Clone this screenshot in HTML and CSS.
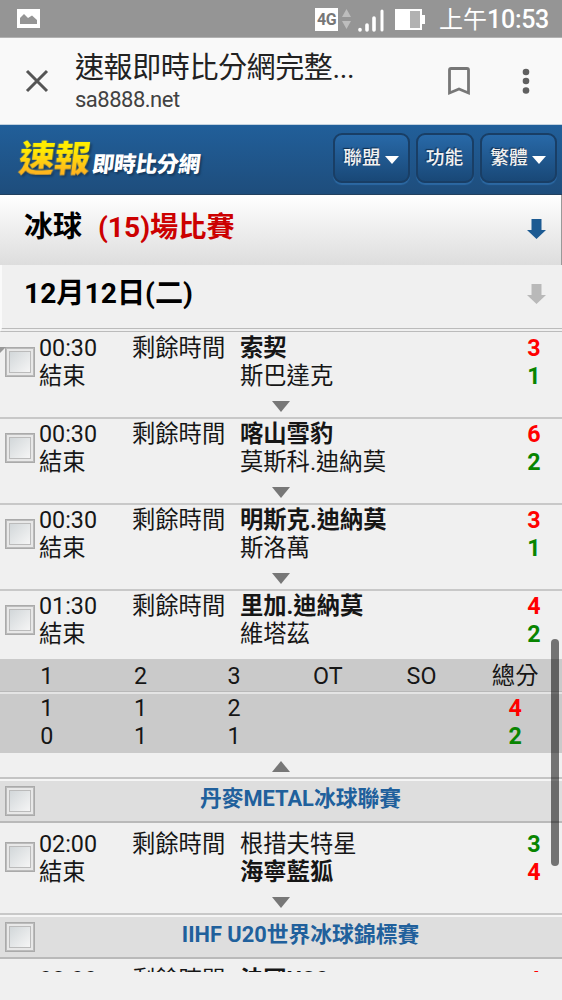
FILE: index.html
```
<!DOCTYPE html>
<html lang="zh-Hant">
<head>
<meta charset="utf-8">
<title>速報即時比分網</title>
<link rel="stylesheet" href="styles.css">
</head>
<body>
<div class="screen">
  <div class="status">
    <svg class="status-picture" width="23" height="19" viewBox="0 0 23 19"><path fill="#fff" d="M0 0h23v19H0z"/><path fill="#959595" d="M3 15V9l4-4 4 4 4-2.500 5 4.500v4z"/></svg>
    <span class="net">4G</span>
    <svg class="updown" width="9" height="20" viewBox="0 0 9 20"><path fill="#bdbdbd" d="M4.500 0 9 8H0zM0 12h9l-4.500 8z"/></svg>
    <svg class="signal" width="26" height="23" viewBox="0 0 26 23"><g stroke="#fff" stroke-width="3.600" stroke-linecap="round"><path d="M2 20.500v.5M9 16v5M16 9v12"/><path d="M24 2v19" stroke-width="3"/></g></svg>
    <svg class="battery" width="31" height="22" viewBox="0 0 31 22"><path fill="#fff" d="M0 0h27v6h3v9h-3v6H0z"/><path fill="#b2b2b2" d="M15 2h10v17H15z"/></svg>
    <span class="clock">上午<b>10:53</b></span>
  </div>
  <div class="browser">
    <svg class="close" width="24" height="24" viewBox="0 0 24 24"><path d="m2 2 20 20M22 2 2 22" stroke="#555" stroke-width="3"/></svg>
    <div class="page-name"><div class="page-title">速報即時比分網完整...</div><div class="page-url">sa8888.net</div></div>
    <svg class="bookmark" width="22" height="29" viewBox="0 0 22 29"><path d="M1.500 3q0-1.500 1.500-1.500h16q1.500 0 1.500 1.500v23L11 22 1.500 26z" fill="none" stroke="#777" stroke-width="2.800"/></svg>
    <svg class="dots" width="8" height="26" viewBox="0 0 8 26"><g fill="#606060"><circle cx="4" cy="4" r="3.300"/><circle cx="4" cy="13" r="3.300"/><circle cx="4" cy="22.500" r="3.300"/></g></svg>
  </div>
  <header class="site">
    <div class="logo"><span class="logo-big">速報</span><span class="logo-small">即時比分網</span></div>
    <nav class="buttons">
      <div class="btn">聯盟<i class="caret"></i></div>
      <div class="btn btn-narrow">功能</div>
      <div class="btn">繁體<i class="caret"></i></div>
    </nav>
  </header>
  <div class="sport"><span>冰球</span><span class="count">(15)場比賽</span>
    <svg class="arrow" width="19" height="20" viewBox="0 0 19 20"><path fill="#1c5a92" d="M4.500 0h10v11H19l-9.500 9L0 11h4.500z"/></svg></div>
  <div class="date"><span>12月12日(二)</span>
    <svg class="arrow" width="19" height="20" viewBox="0 0 19 20"><path fill="#b9b9b9" d="M4.500 0h10v11H19l-9.500 9L0 11h4.500z"/></svg></div>
  <main class="list">
    <section class="match first">
      <i class="check"></i><div>00:30<br>結束</div><div>剩餘時間</div><div><b>索契</b><br>斯巴達克</div><div class="score"><span class="win">3</span><br><span class="lose">1</span></div><i class="more"></i>
    </section>
    <section class="match">
      <i class="check"></i><div>00:30<br>結束</div><div>剩餘時間</div><div><b>喀山雪豹</b><br>莫斯科.迪納莫</div><div class="score"><span class="win">6</span><br><span class="lose">2</span></div><i class="more"></i>
    </section>
    <section class="match">
      <i class="check"></i><div>00:30<br>結束</div><div>剩餘時間</div><div><b>明斯克.迪納莫</b><br>斯洛萬</div><div class="score"><span class="win">3</span><br><span class="lose">1</span></div><i class="more"></i>
    </section>
    <section class="match open">
      <i class="check"></i><div>01:30<br>結束</div><div>剩餘時間</div><div><b>里加.迪納莫</b><br>維塔茲</div><div class="score"><span class="win">4</span><br><span class="lose">2</span></div>
    </section>
    <section class="periods">
      <div class="period-row head"><span>1</span><span>2</span><span>3</span><span>OT</span><span>SO</span><span>總分</span></div>
      <div class="period-row"><span>1</span><span>1</span><span>2</span><span></span><span></span><span class="win">4</span></div>
      <div class="period-row"><span>0</span><span>1</span><span>1</span><span></span><span></span><span class="lose">2</span></div>
    </section>
    <div class="fold"><i class="less"></i></div>
    <div class="league"><i class="check"></i><span>丹麥METAL冰球聯賽</span></div>
    <section class="match tall">
      <i class="check"></i><div>02:00<br>結束</div><div>剩餘時間</div><div>根措夫特星<br><b>海寧藍狐</b></div><div class="score"><span class="lose">3</span><br><span class="win">4</span></div><i class="more"></i>
    </section>
    <div class="league"><i class="check"></i><span>IIHF U20世界冰球錦標賽</span></div>
    <section class="match tall cut">
      <i></i><div>02:00</div><div>剩餘時間</div><div><b>法國U20</b></div><div class="score"><span class="win">4</span></div>
    </section>
  </main>
  <i class="scrollbar"></i>
  <i class="corner"></i>
</div>
</body>
</html>
```
FILE: styles.css
```
* { box-sizing: border-box; }
body { margin: 0; background: #f0f0f0; font-family: Roboto, "Noto Sans CJK TC", sans-serif; color: #161616; }
svg { display: block; flex: none; }
i { font-style: normal; }
.screen { position: relative; width: 562px; height: 1000px; overflow: hidden; }

.status { height: 38px; padding: 0 13px 0 17px; display: flex; align-items: center; background: #959595; border-bottom: 1px solid #b2b2b2; color: #fff; }
.net { width: 23px; height: 23px; margin: 1px 4px 0 275px; background: #fff; color: #777; font: bold 16px/24px Roboto, sans-serif; text-align: center; letter-spacing: -.5px; }
.signal { margin: 4px 0 0 7px; }
.battery { margin: 2px 0 0 11px; }
.clock { margin-left: auto; font-size: 24px; line-height: 36px; white-space: nowrap; padding-top: 3px; }
.clock b { font-weight: 500; font-size: 25px; letter-spacing: -.3px; }

.browser { height: 87px; display: flex; align-items: center; padding: 0 32px 0 25px; background: #f9f9f9; border-bottom: 1px solid #c3d2df; }
.close { margin-top: -1px; }
.page-name { margin-left: 26px; flex: 1; align-self: flex-start; white-space: nowrap; }
.page-title { font-size: 29px; line-height: 44px; padding-top: 8px; height: 48px; color: #222; letter-spacing: -.4px; }
.page-url { font-size: 22px; line-height: 28px; color: #424242; letter-spacing: -.5px; }
.dots { margin-left: 52px; }

.site { height: 70px; display: flex; justify-content: space-between; align-items: flex-start; padding: 8px 5px 0 19px; background: linear-gradient(#215f9a, #1e4d7c); border-bottom: 1px solid #22415f; }
.logo { display: flex; align-items: flex-start; font-weight: 900; transform: skewX(-7deg); transform-origin: left center; padding-top: 2px; }
.logo-big { font-size: 36px; line-height: 50px; letter-spacing: -.5px; background: linear-gradient(#ffed00 28%, #ffb51e 75%); -webkit-background-clip: text; background-clip: text; color: transparent; filter: drop-shadow(2px 2px 1px #163b60); }
.logo-small { font-size: 22px; line-height: 32px; padding-top: 14px; color: #fff; margin-left: 3px; text-shadow: 2px 2px 2px #163b60; letter-spacing: -.5px; }
.buttons { display: flex; gap: 6px; }
.btn { width: 77px; height: 50px; display: flex; align-items: center; justify-content: center; gap: 4px; border: 2px solid #193e65; border-radius: 9px; background: linear-gradient(#2869a8, #194877); box-shadow: 0 2px 1px #2c68a2; color: #f1f1f1; font-size: 18.700px; line-height: 28px; text-shadow: -1px -1px 1px #102d4b; padding: 0 1px 1px 0; font-weight: 500; }
.btn-narrow { width: 58px; }
.caret { border: 7.500px solid transparent; border-top: 8px solid #fff; border-bottom: 0; margin-top: 5px; }

.sport, .date { display: flex; align-items: center; font-weight: bold; color: #000; }
.sport { height: 70px; padding: 0 16px 6px 24px; font-size: 29px; line-height: 44px; background: linear-gradient(#fff, #ddd); border-right: 1px solid #999; }
.count { color: #c00; margin-left: 16px; font-size: 28.200px; padding-top: 1px; }
.arrow { margin-left: auto; }
.sport .arrow { margin-top: 4px; margin-right: -1px; }
.date { height: 67px; padding: 0 16px 8px 22px; font-size: 28.200px; line-height: 40px; background: #f0f0f0; border-left: 2px solid #fafafa; border-bottom: 4px double #bbb; }
.date span { padding-top: 2px; }
.date .arrow { margin-top: 2px; }

.list { height: 640px; overflow: hidden; font-size: 23.300px; line-height: 28px; }
.match { display: grid; grid-template-columns: 34px 93px 108px 281px 1fr; height: 86px; padding: 1px 0 0 5px; border-bottom: 2px solid #c8c8c8; position: relative; white-space: nowrap; background: #f0f0f0; }
.first { height: 87px; padding-top: 2px; }
.score { text-align: center; padding-right: 15px; }
.win { color: #f00; font-weight: bold; }
.lose { color: #088400; font-weight: bold; }
.check { display: block; width: 30px; height: 30px; margin-top: 13px; border: 1px solid #aaa; outline: 1px solid #bbb; outline-offset: -5px; background: linear-gradient(135deg, #cbd1d4, #f5f5f5 85%); box-shadow: inset 0 0 0 1px #bbb, inset 0 0 0 4px #e8e8e8; }
.more, .less { border: 9px solid transparent; position: absolute; left: 272px; }
.more { top: 68px; border-top: 11px solid #777; border-bottom: 0; }
.first .more { top: 69px; }
.less { top: 8px; border-bottom: 11px solid #777; border-top: 0; }
.open { height: 68px; border: 0; }
.periods { height: 94px; background: #cacaca; }
.period-row { display: grid; grid-template-columns: repeat(6, 1fr); text-align: center; height: 28px; }
.head { height: 35px; line-height: 35px; border-bottom: 2px solid #e4e4e4; box-shadow: inset 0 -1px #b8b8b8; }
.fold { height: 26px; border-bottom: 2px solid #c4c4c4; position: relative; }
.league { display: grid; grid-template-columns: 34px 1fr; height: 44px; padding: 0 0 0 5px; color: #20609c; font-size: 21.800px; font-weight: bold; line-height: 36px; background: #dedede; border-top: 2px solid #f5f5f5; border-bottom: 2px solid #b9b9b9; text-align: center; }
.league .check { margin-top: 5px; }
.tall { height: 92px; padding-top: 7px; }
.tall .check { margin-top: 12px; }
.tall .more { top: 74px; }
.cut { height: 60px; }

.scrollbar { position: absolute; left: 551px; top: 639px; width: 8px; height: 227px; border-radius: 4px; background: rgba(0, 0, 0, .52); }
.corner { position: absolute; left: 0; top: 347px; border-top: 6px solid #999; border-right: 6px solid transparent; }
```
